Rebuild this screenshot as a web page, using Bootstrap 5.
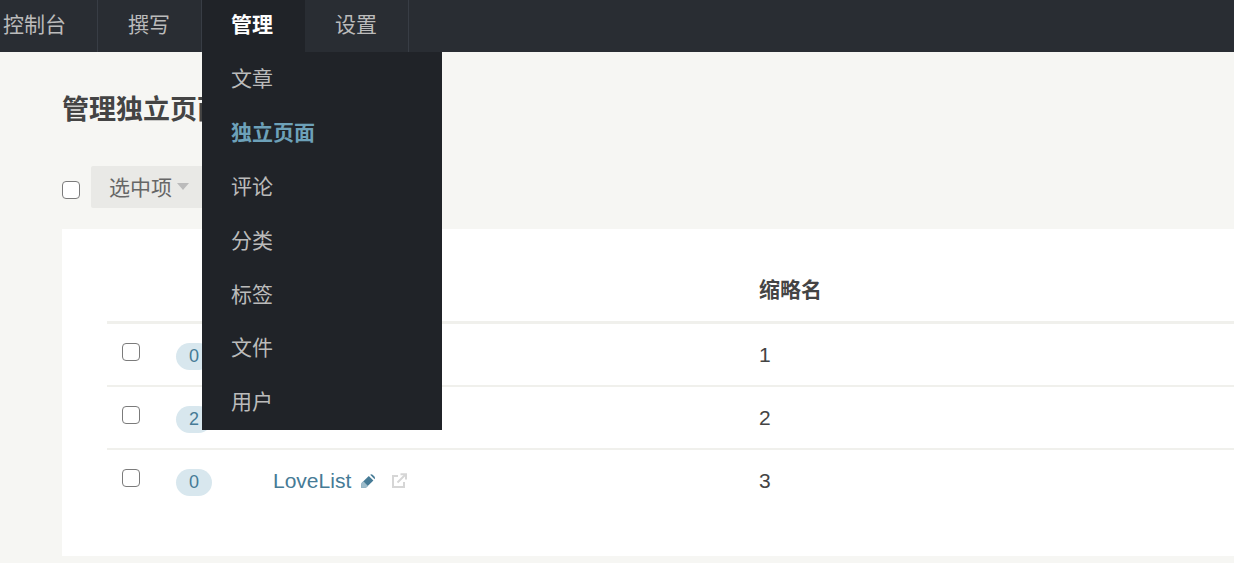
<!DOCTYPE html>
<html lang="zh-CN">
<head>
    <meta charset="UTF-8">
    <meta name="viewport" content="width=device-width, initial-scale=1.0">
    <title>管理独立页面</title>
    <link href="https://cdn.jsdelivr.net/npm/bootstrap@5.3.0/dist/css/bootstrap.min.css" rel="stylesheet">
    <style>
        html, body {
            height: 563px;
            overflow: hidden;
        }
        body {
            background: #f6f6f3;
            color: #444;
            font-family: "Liberation Sans", "Noto Sans CJK SC", sans-serif;
            font-size: 21px;
        }
        .top-nav {
            height: 52px;
            background: #292d33;
            margin-left: -27px;
        }
        .top-item {
            display: block;
            height: 52px;
            line-height: 50px;
            padding: 0 31px 0 30px;
            color: #bbb;
            border-right: 1px solid #383d45;
            text-decoration: none;
        }
        .top-item.is-active {
            background: #202328;
            color: #fff;
            font-weight: 700;
            padding-left: 29px;
            border-right-color: #202328;
        }
        .top-holder {
            position: relative;
        }
        .sub-menu {
            position: absolute;
            top: 52px;
            left: 0;
            width: 240px;
            height: 378px;
            background: #202328;
            z-index: 5;
        }
        .sub-link {
            display: block;
            height: 53.9px;
            line-height: 53px;
            padding: 0 29px;
            color: #bbb;
            text-decoration: none;
        }
        .sub-link.is-current {
            color: #6da1b9;
            font-weight: 700;
        }
        .page-body {
            padding: 0 0 0 62px;
        }
        .page-title {
            font-size: 27px;
            font-weight: 700;
            line-height: 40px;
            margin: 38px 0 0;
        }
        .tool-row {
            margin-top: 36px;
            height: 42px;
        }
        .tick {
            appearance: none;
            width: 18px;
            height: 18px;
            margin: 0;
            border: 1.5px solid #7b7b7b;
            border-radius: 4px;
            flex-shrink: 0;
            background: #fff;
            display: block;
        }
        .tool-row .tick {
            margin-top: 6px;
        }
        .pick-btn {
            height: 42px;
            margin-left: 11px;
            padding: 2px 18px 0;
            background: #e9e9e6;
            color: #666;
            border: 0;
            border-radius: 2px;
            font-size: 21px;
            display: flex;
            align-items: center;
        }
        .caret-down {
            width: 0;
            height: 0;
            margin-left: 5px;
            margin-top: -3px;
            border-left: 6px solid transparent;
            border-right: 6px solid transparent;
            border-top: 7px solid #bbb;
        }
        .white-panel {
            background: #fff;
            margin-top: 21px;
            height: 327px;
            padding: 30px 0 0 45px;
        }
        .head-row, .data-row {
            display: flex;
        }
        .head-row {
            height: 65px;
            font-weight: 700;
            line-height: 62px;
            border-bottom: 3px solid #f0f0ec;
            color: #444;
        }
        .data-row {
            height: 63px;
            border-bottom: 2px solid #f0f0ec;
        }
        .data-row:last-child {
            border-bottom: 0;
        }
        .col-tick {
            width: 69px;
            padding: 19px 0 0 15px;
        }
        .col-count {
            width: 97px;
            padding-top: 19px;
        }
        .col-name {
            width: 486px;
            padding-top: 16px;
            color: #467b96;
        }
        .name-line {
            height: 30px;
        }
        .col-slug {
            flex: 1;
            line-height: 30px;
            padding-top: 16px;
        }
        .head-row .col-slug {
            padding-top: 0;
            line-height: 62px;
        }
        .count-pill {
            display: block;
            width: 36px;
            height: 27px;
            line-height: 27px;
            border-radius: 14px;
            background: #d8e7ee;
            color: #467b96;
            font-size: 18px;
            text-align: center;
        }
        .edit-icon {
            margin-left: 9px;
        }
        .open-icon {
            margin-left: 15px;
        }
    </style>
</head>
<body>
    <nav class="top-nav d-flex">
        <a class="top-item" href="#">控制台</a>
        <a class="top-item" href="#">撰写</a>
        <div class="top-holder">
            <a class="top-item is-active" href="#">管理</a>
            <div class="sub-menu">
                <a class="sub-link" href="#">文章</a>
                <a class="sub-link is-current" href="#">独立页面</a>
                <a class="sub-link" href="#">评论</a>
                <a class="sub-link" href="#">分类</a>
                <a class="sub-link" href="#">标签</a>
                <a class="sub-link" href="#">文件</a>
                <a class="sub-link" href="#">用户</a>
            </div>
        </div>
        <a class="top-item" href="#">设置</a>
    </nav>

    <main class="page-body">
        <h2 class="page-title">管理独立页面</h2>
        <div class="tool-row d-flex align-items-center">
            <input class="tick" type="checkbox" aria-label="全选">
            <button class="pick-btn" type="button">选中项<span class="caret-down"></span></button>
        </div>
        <section class="white-panel">
            <div class="head-row">
                <div class="col-tick"></div>
                <div class="col-count"></div>
                <div class="col-name"></div>
                <div class="col-slug">缩略名</div>
            </div>
            <div class="data-row">
                <div class="col-tick"><input class="tick" type="checkbox" aria-label="选择"></div>
                <div class="col-count"><span class="count-pill">0</span></div>
                <div class="col-name"></div>
                <div class="col-slug">1</div>
            </div>
            <div class="data-row">
                <div class="col-tick"><input class="tick" type="checkbox" aria-label="选择"></div>
                <div class="col-count"><span class="count-pill">2</span></div>
                <div class="col-name"></div>
                <div class="col-slug">2</div>
            </div>
            <div class="data-row">
                <div class="col-tick"><input class="tick" type="checkbox" aria-label="选择"></div>
                <div class="col-count"><span class="count-pill">0</span></div>
                <div class="col-name">
                    <div class="name-line d-flex align-items-center">
                        <span>LoveList</span>
                        <svg class="edit-icon" width="16" height="16" viewBox="0 0 16 16"><path d="M1 15 L1.6 10 L8.8 3 L13.4 7.6 L6.2 14.6 Z" fill="#467b96"/><path d="M1 15 L1.6 10 L3.4 8.3 L8 13 L6.2 14.6 Z" fill="#9dbccb"/><path d="M10.2 1.8 Q11.4 0.9 12.6 1.8 L14.6 3.8 Q15.5 5 14.6 6.2 Z" fill="#467b96"/></svg>
                        <svg class="open-icon" width="16" height="16" viewBox="0 0 16 16" fill="none" stroke="#d6d6d6" stroke-width="2"><path d="M7 3 H2 V14 H13 V9"/><path d="M6.5 9.5 L14 2"/><path d="M9.5 1.2 H15 V6.5"/></svg>
                    </div>
                </div>
                <div class="col-slug">3</div>
            </div>
        </section>
    </main>

    <script src="https://cdn.jsdelivr.net/npm/bootstrap@5.3.0/dist/js/bootstrap.bundle.min.js"></script>
</body>
</html>
